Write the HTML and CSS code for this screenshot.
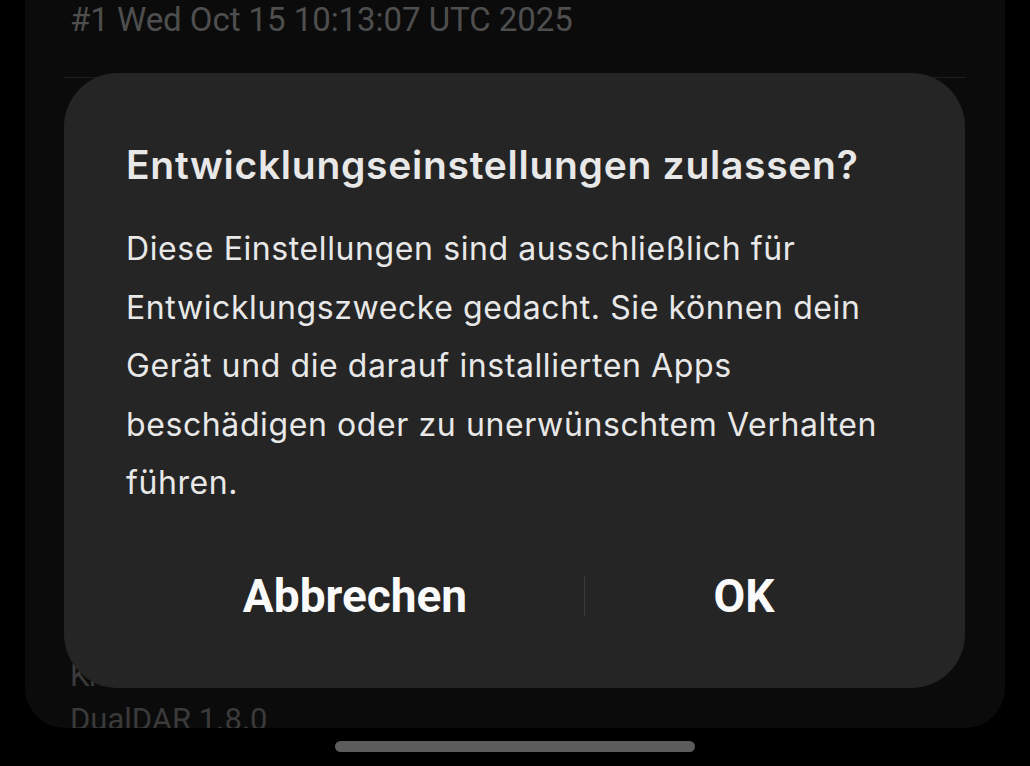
FILE: index.html
```html
<!DOCTYPE html>
<html lang="de">
<head>
<meta charset="utf-8">
<title>Entwicklungseinstellungen</title>
<link rel="stylesheet" href="styles.css">
</head>
<body>
<div class="screen">
  <div class="card">
    <div class="build">#1 Wed Oct 15 10:13:07 UTC 2025</div>
    <div class="rule"></div>
    <div class="spacer"></div>
    <div class="info">
      <div class="info-line">Knox API 3.12</div>
      <div class="info-line">DualDAR 1.8.0</div>
    </div>
  </div>
  <div class="navbar"><div class="handle"></div></div>

  <div class="dialog" role="dialog">
    <h1 class="dialog-title">Entwicklungseinstellungen zulassen?</h1>
    <p class="dialog-text">Diese Einstellungen sind ausschließlich für Entwicklungszwecke gedacht. Sie können dein Gerät und die darauf installierten Apps beschädigen oder zu unerwünschtem Verhalten führen.</p>
    <div class="dialog-actions">
      <button class="btn">Abbrechen</button>
      <span class="sep"></span>
      <button class="btn">OK</button>
    </div>
  </div>
</div>
</body>
</html>
```

FILE: styles.css
```css
html, body {
  margin: 0;
  padding: 0;
  background: #000;
}
body {
  font-family: Roboto, "Noto Sans", sans-serif;
  width: 1030px;
  height: 766px;
  overflow: hidden;
}
.screen {
  position: relative;
  width: 1030px;
  height: 766px;
  display: flex;
  flex-direction: column;
}
.card {
  margin: 0 25px;
  height: 728px;
  background: #0b0b0b;
  border-radius: 0 0 40px 40px;
  display: flex;
  flex-direction: column;
  overflow: hidden;
  padding: 0 39px;
}
.build {
  padding-left: 6px;
  margin-top: 0;
  font-size: 33px;
  line-height: 40px;
  color: #4e4e4e;
  letter-spacing: -0.05px;
}
.rule {
  margin-top: 37px;
  height: 1px;
  background: #1e1e1e;
}
.spacer { flex: 1; }
.info {
  padding-left: 6px;
  margin-bottom: -14px;
}
.info-line {
  font-size: 31px;
  line-height: 44px;
  color: #3a3a3a;
}
.navbar {
  flex: 1;
  display: flex;
  align-items: center;
  justify-content: center;
  padding-bottom: 2px;
}
.handle {
  width: 360px;
  height: 11px;
  border-radius: 6px;
  background: #5c5c5c;
}
.dialog {
  position: absolute;
  left: 64px;
  top: 73px;
  width: 901px;
  height: 615px;
  box-sizing: border-box;
  background: #252525;
  border-radius: 54px;
  padding: 68px 62px 0 62px;
  display: flex;
  flex-direction: column;
}
.dialog-title {
  margin: 0;
  font-family: Inter, Roboto, sans-serif;
  font-size: 39px;
  line-height: 48px;
  font-weight: 600;
  color: #e8e8e8;
  letter-spacing: 0.72px;
}
.dialog-text {
  margin: 31px 0 0 0;
  font-family: Inter, Roboto, sans-serif;
  font-size: 32px;
  line-height: 58.5px;
  color: #e8e8e8;
  letter-spacing: 0.6px;
  width: 777px;
}
.dialog-actions {
  margin-top: auto;
  margin-bottom: 62px;
  display: grid;
  grid-template-columns: 458px 1px 1fr;
  align-items: center;
  height: 60px;
}
.btn {
  background: none;
  border: 0;
  padding: 0;
  font-family: Roboto, "Noto Sans", sans-serif;
  font-size: 46px;
  font-weight: 700;
  color: #fafafa;
  line-height: 60px;
  text-align: center;
  cursor: pointer;
}
.sep {
  width: 1px;
  height: 40px;
  background: #3c3c3c;
}
```
